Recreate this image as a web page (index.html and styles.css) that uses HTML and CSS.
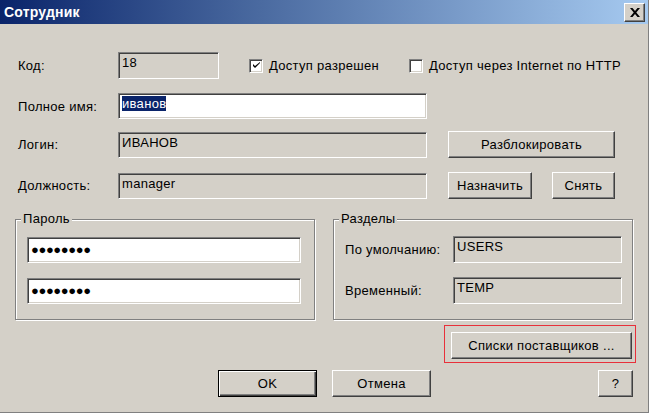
FILE: index.html
```html
<!DOCTYPE html>
<html>

<head>
    <title>Сотрудник</title>
    <link rel="stylesheet" href="styles.css">
</head>

<body>
    <div class="window">
        <div class="titlebar">
            <span class="title">Сотрудник</span>
            <button class="close-btn">
                <svg width="10" height="9" viewBox="0 0 10 9">
                    <path d="M0 0h2.5l2.5 3 2.5-3h2.5l-3.7 4.5 3.7 4.5h-2.5l-2.5-3-2.5 3h-2.5l3.7-4.5z" fill="#000"/>
                </svg>
            </button>
        </div>

        <div class="content">
            <div class="row row-code">
                <label class="label">Код:</label>
                <div class="field readonly short">18</div>
                <div class="check check-access">
                    <span class="box checked">
                        <svg width="7" height="7" viewBox="0 0 7 7">
                            <path d="M0 2v2l2 2 5-5v-1l-5 4z" fill="#000"/>
                        </svg>
                    </span>
                    Доступ разрешен
                </div>
                <div class="check check-http">
                    <span class="box"></span>
                    Доступ через Internet по HTTP
                </div>
            </div>

            <div class="row row-name">
                <label class="label">Полное имя:</label>
                <div class="field wide"><span class="selected">иванов</span></div>
            </div>

            <div class="row row-login">
                <label class="label">Логин:</label>
                <div class="field readonly wide">ИВАНОВ</div>
                <button class="btn btn-unlock">Разблокировать</button>
            </div>

            <div class="row row-post">
                <label class="label">Должность:</label>
                <div class="field readonly wide">manager</div>
                <button class="btn btn-assign">Назначить</button>
                <button class="btn btn-remove">Снять</button>
            </div>

            <div class="groups">
                <div class="group group-password">
                    <span class="legend">Пароль</span>
                    <div class="field password">●●●●●●●●</div>
                    <div class="field password">●●●●●●●●</div>
                </div>
                <div class="group group-sections">
                    <span class="legend">Разделы</span>
                    <div class="section-row">
                        <span class="section-label">По умолчанию:</span>
                        <div class="field readonly section-field">USERS</div>
                    </div>
                    <div class="section-row">
                        <span class="section-label">Временный:</span>
                        <div class="field readonly section-field">TEMP</div>
                    </div>
                </div>
            </div>

            <div class="row row-suppliers">
                <div class="focus-frame">
                    <button class="btn btn-suppliers">Списки поставщиков ...</button>
                </div>
            </div>

            <div class="row row-actions">
                <button class="btn btn-ok">OK</button>
                <button class="btn btn-cancel">Отмена</button>
                <button class="btn btn-help">?</button>
            </div>
        </div>
    </div>
</body>

</html>
```

FILE: styles.css
```css
body {
    margin: 0;
    background-color: #d4d0c8;
    font-family: "Liberation Sans", Arial, sans-serif;
    font-size: 13px;
    letter-spacing: 0.3px;
    color: #000;
}

.window {
    width: 648px;
    height: 412px;
    background-color: #d4d0c8;
    border-right: 1px solid #808080;
    border-bottom: 1px solid #808080;
    display: flex;
    flex-direction: column;
}

.titlebar {
    height: 24px;
    background: linear-gradient(to right, #0a246a, #4a6aa0 40%, #a6caf0);
    display: flex;
    align-items: center;
    justify-content: space-between;
    padding: 0 3px 0 4px;
}

.title {
    color: #fff;
    font-weight: bold;
    font-size: 14px;
    letter-spacing: 0.2px;
}

.close-btn {
    width: 21px;
    height: 19px;
    padding: 0;
    background-color: #d4d0c8;
    border: 1px solid;
    border-color: #fff #404040 #404040 #fff;
    box-shadow: inset -1px -1px 0 #808080;
    display: flex;
    align-items: center;
    justify-content: center;
}

.content {
    padding: 28px 0 0 18px;
}

.row {
    display: flex;
    align-items: center;
}

.label {
    width: 100px;
}

.field {
    box-sizing: border-box;
    height: 27px;
    padding: 2px 3px;
    background-color: #fff;
    border: 1px solid;
    border-color: #808080 #fff #fff #808080;
    box-shadow: inset 1px 1px 0 #404040, inset -1px -1px 0 #d4d0c8;
    white-space: nowrap;
}

.field.readonly {
    background-color: #d4d0c8;
}

.short {
    width: 101px;
}

.wide {
    width: 309px;
    height: 26px;
}

.selected {
    background-color: #0a246a;
    color: #fff;
}

.check {
    display: flex;
    align-items: center;
    gap: 6px;
}

.check-access {
    margin-left: 30px;
}

.check-http {
    margin-left: 30px;
}

.box {
    box-sizing: border-box;
    width: 14px;
    height: 14px;
    background-color: #fff;
    border: 1px solid;
    border-color: #808080 #fff #fff #808080;
    box-shadow: inset 1px 1px 0 #404040, inset -1px -1px 0 #d4d0c8;
    display: flex;
    align-items: center;
    justify-content: center;
}

.row-name {
    margin-top: 14px;
}

.row-login {
    margin-top: 12px;
}

.row-post {
    margin-top: 14px;
}

.btn {
    box-sizing: border-box;
    height: 27px;
    padding: 0;
    background-color: #d4d0c8;
    font-family: inherit;
    font-size: 13px;
    letter-spacing: 0.3px;
    color: #000;
    border: 1px solid;
    border-color: #fff #404040 #404040 #fff;
    box-shadow: inset -1px -1px 0 #808080;
}

.btn-unlock {
    width: 167px;
    margin-left: 21px;
}

.btn-assign {
    width: 84px;
    margin-left: 21px;
}

.btn-remove {
    width: 63px;
    margin-left: 20px;
}

.groups {
    display: flex;
    gap: 18px;
    margin: 20px 0 0 -3px;
}

.group {
    position: relative;
    box-sizing: border-box;
    width: 300px;
    height: 101px;
    border: 1px solid #808080;
    box-shadow: inset 1px 1px 0 #fff, 1px 1px 0 #fff;
    display: flex;
    flex-direction: column;
}

.legend {
    position: absolute;
    top: -9px;
    left: 5px;
    padding: 0 2px;
    background-color: #d4d0c8;
    line-height: 16px;
}

.group-password {
    padding: 17px 0 0 11px;
    gap: 15px;
}

.password {
    width: 274px;
    height: 26px;
    font-size: 13px;
    line-height: 20px;
    letter-spacing: -0.4px;
}

.group-sections {
    padding: 16px 0 0 11px;
    gap: 14px;
}

.section-row {
    display: flex;
    align-items: center;
}

.section-label {
    width: 108px;
}

.section-field {
    width: 169px;
}

.row-suppliers {
    justify-content: flex-end;
    margin: 5px 12px 0 0;
}

.focus-frame {
    border: 1px solid #e8303a;
    padding: 6px 3px 3px 6px;
}

.btn-suppliers {
    width: 181px;
}

.row-actions {
    margin-top: 7px;
    padding-left: 200px;
}

.btn-ok {
    width: 99px;
    border-color: #000;
    box-shadow: inset 1px 1px 0 #fff, inset -1px -1px 0 #404040, inset -2px -2px 0 #808080;
}

.btn-cancel {
    width: 99px;
    margin-left: 15px;
}

.btn-help {
    width: 35px;
    margin-left: 167px;
}
```
